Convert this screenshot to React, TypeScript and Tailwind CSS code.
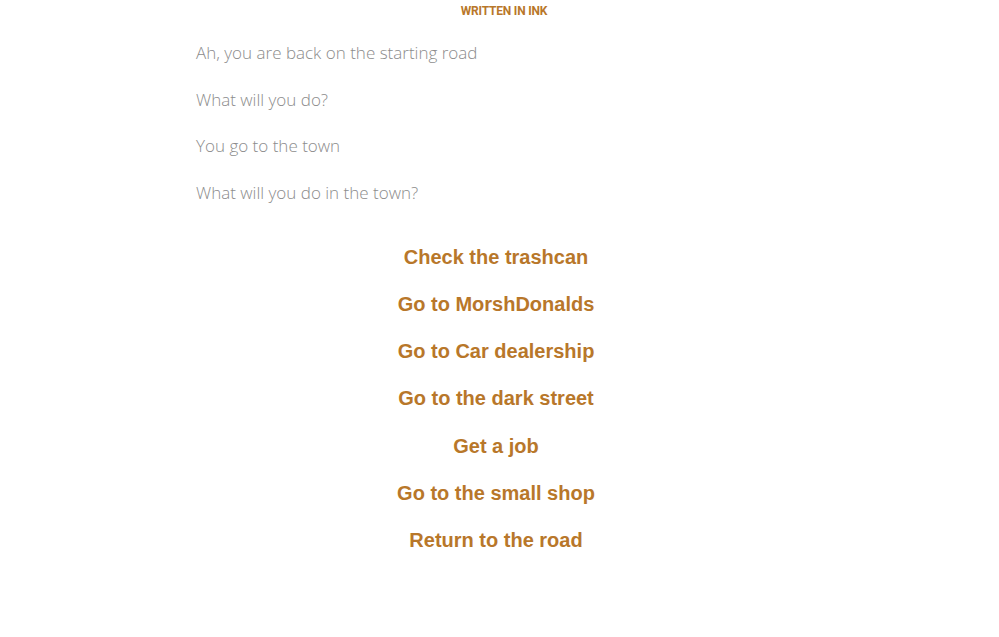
const paragraphs = [
  "Ah, you are back on the starting road",
  "What will you do?",
  "You go to the town",
  "What will you do in the town?",
];

const choices = [
  "Check the trashcan",
  "Go to MorshDonalds",
  "Go to Car dealership",
  "Go to the dark street",
  "Get a job",
  "Go to the small shop",
  "Return to the road",
];

export default function App() {
  return (
    <div className="min-h-[637px] bg-white">
      {/* Title */}
      <div className="flex justify-center pt-[4px] pl-[9px]">
        <h1 className="font-['Roboto',sans-serif] text-[12px] font-bold uppercase leading-[14px] tracking-[-0.2px] text-[#b8772a]">
          Written in ink
        </h1>
      </div>

      <div className="ml-[196px] w-[600px]">
        {/* Story text */}
        <div className="mt-[23px] flex flex-col">
          {paragraphs.map((p, i) => (
            <p
              key={i}
              className="h-[46.7px] font-['Open_Sans',sans-serif] text-[17px] font-light leading-[24px] text-[#8c8c8c]"
            >
              {p}
            </p>
          ))}
        </div>

        {/* Choices */}
        <ul className="mt-[17px] flex flex-col items-center">
          {choices.map((c, i) => (
            <li
              key={i}
              className="h-[47.2px] font-['Liberation_Sans',Arial,sans-serif] text-[20px] font-bold leading-[24px] text-[#b8772a]"
            >
              {c}
            </li>
          ))}
        </ul>
      </div>
    </div>
  );
}
